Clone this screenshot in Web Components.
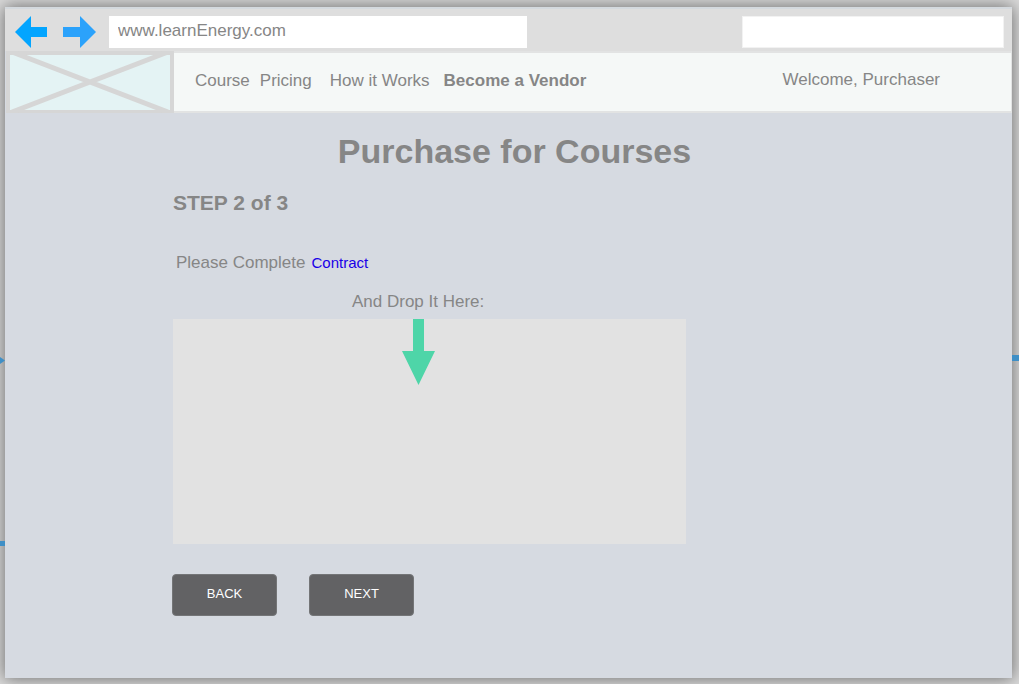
<!DOCTYPE html>
<html lang="en">
<head>
<meta charset="utf-8">
<meta name="viewport" content="width=device-width, initial-scale=1">
<title>learnEnergy – Purchase for Courses</title>
<style>
  html { height: 100%; }
  body {
    margin: 0; min-height: 100%; display: flex; background: #dcdcdc;
    font: 17px/20px "Liberation Sans", Arial, sans-serif; color: #868686;
  }
</style>
</head>
<body>
<browser-frame>
  <browser-toolbar slot="toolbar" address="www.learnEnergy.com"></browser-toolbar>
  <site-header slot="header">
    <a href="#course">Course</a>
    <a href="#pricing">Pricing</a>
    <a href="#how" class="apart">How it Works</a>
    <a href="#vendor" class="strong">Become a Vendor</a>
    <span slot="user">Welcome, Purchaser</span>
  </site-header>
  <purchase-step>
    <span slot="title">Purchase for Courses</span>
    <span slot="step">STEP 2 of 3</span>
    <drop-zone>And Drop It Here:</drop-zone>
    <step-button slot="actions">BACK</step-button>
    <step-button slot="actions">NEXT</step-button>
  </purchase-step>
</browser-frame>
<script>
function define(name, html) {
  const template = document.createElement('template');
  template.innerHTML = html;
  customElements.define(name, class extends HTMLElement {
    constructor() {
      super();
      this.attachShadow({ mode: 'open' }).append(template.content.cloneNode(true));
    }
    connectedCallback() {
      if (this.hasAttribute('address')) {
        this.shadowRoot.querySelector('.address').value = this.getAttribute('address');
      }
    }
  });
}

define('browser-frame', `
  <style>
    :host { display: flex; flex: 1; position: relative; overflow: hidden; padding: 7px 7px 6px 5px; }
    .window { flex: 1; background: #d6dae1; box-shadow: 0 0 16px 1px rgba(0,0,0,.5); }
    .wire { position: absolute; z-index: 1; background: #3f8fc6; height: 5px; }
    .in { left: 0; top: 357px; width: 5px; height: 7px; clip-path: polygon(0 0, 100% 50%, 0 100%); }
    .back { left: 0; top: 541px; width: 5px; }
    .out { right: 0; top: 355px; width: 7px; height: 6px; }
  </style>
  <div class="window">
    <slot name="toolbar"></slot>
    <slot name="header"></slot>
    <slot></slot>
  </div>
  <i class="wire in"></i><i class="wire back"></i><i class="wire out"></i>`);

define('browser-toolbar', `
  <style>
    :host { display: flex; align-items: center; box-sizing: border-box; height: 44px; padding: 4px 8px 0 10px;
      border-top: 2px solid #d4d9de; background: #dedede; }
    button { flex: none; border: 0; padding: 0; background: none; height: 32px; margin-right: 16px; }
    button + button { margin-right: 13px; }
    svg { display: block; }
    input { box-sizing: border-box; min-width: 0; height: 32px; border: 0; padding: 0 9px 2px; background: #fff;
      font: inherit; color: inherit; }
    .address { flex: 0 1 418px; }
    .search { flex: 0 1 262px; margin-left: auto; border: 1px solid #f2f2f2; }
  </style>
  <button aria-label="Back"><svg width="32" height="32" viewBox="0 0 32 32"><path fill="#03a5ff" d="M0 16 16 0V11H32V21H16V32Z"/></svg></button>
  <button aria-label="Forward"><svg width="33" height="32" viewBox="0 0 33 32"><path fill="#2ba2fb" d="M33 16 17 0V11H0V21H17V32Z"/></svg></button>
  <input class="address" aria-label="Address" type="text">
  <input class="search" aria-label="Search" type="text">`);

define('site-header', `
  <style>
    :host { display: flex; height: 62px; margin-left: 1px; }
    svg { display: block; flex: none; }
    .bar { flex: 1; display: flex; align-items: center; justify-content: space-between; box-sizing: border-box;
      border: solid #e2e3e3; border-width: 2px 1px 2px 0; background: #f5f8f7; padding: 0 71px 4px 21px; }
    nav { display: flex; }
    ::slotted(a) { color: inherit; text-decoration: none; margin-right: 10px; padding-top: 2px; white-space: nowrap; }
    ::slotted(.apart) { margin: 0 14px 0 8px; }
    ::slotted(.strong) { font-weight: bold; }
  </style>
  <svg width="168" height="62" viewBox="0 0 168 62" role="img" aria-label="Logo">
    <path fill="#d6d6d6" d="M0 0H168V62H0Z"/><path fill="#e4f3f4" d="M4 4H164V59H4Z"/>
    <path stroke="#d6d6d6" stroke-width="5" d="M6 1 162 61M162 1 6 61"/>
  </svg>
  <div class="bar"><nav><slot></slot></nav><slot name="user"></slot></div>`);

define('purchase-step', `
  <style>
    :host { display: block; padding: 18px 0 62px 168px; }
    h1 { margin: 0 0 20px -156px; text-align: center; font-size: 34px; line-height: 40px; }
    h2 { margin: 0; font-size: 21px; line-height: 24px; }
    p { margin: 38px 0 19px 3px; display: flex; gap: 6px; align-items: center; }
    a { color: #1a00e8; font-size: 15px; text-decoration: none; }
    .actions { display: flex; gap: 32px; margin: 30px 0 0 -1px; }
  </style>
  <h1><slot name="title"></slot></h1>
  <h2><slot name="step"></slot></h2>
  <p><span>Please Complete</span><a href="#contract">Contract</a></p>
  <slot></slot>
  <div class="actions"><slot name="actions"></slot></div>`);

define('drop-zone', `
  <style>
    :host { display: block; max-width: 513px; margin-right: 20px; }
    .label { padding-left: 179px; }
    .area { height: 225px; margin-top: 7px; padding-left: 229px; background: #e2e2e2; }
    svg { display: block; }
  </style>
  <div class="label"><slot></slot></div>
  <div class="area"><svg width="33" height="66" viewBox="0 0 66 132"><path fill="#4ed5a8" d="M22 0H44V64H66L33 132 0 64H22Z"/></svg></div>`);

define('step-button', `
  <style>
    :host { display: block; }
    button { display: block; width: 105px; height: 42px; padding: 0 0 2px; border: 1px solid #747577; border-radius: 4px;
      background: #626264; color: #fff; font: 13px/20px "Liberation Sans", Arial, sans-serif; }
  </style>
  <button type="button"><slot></slot></button>`);
</script>
</body>
</html>
